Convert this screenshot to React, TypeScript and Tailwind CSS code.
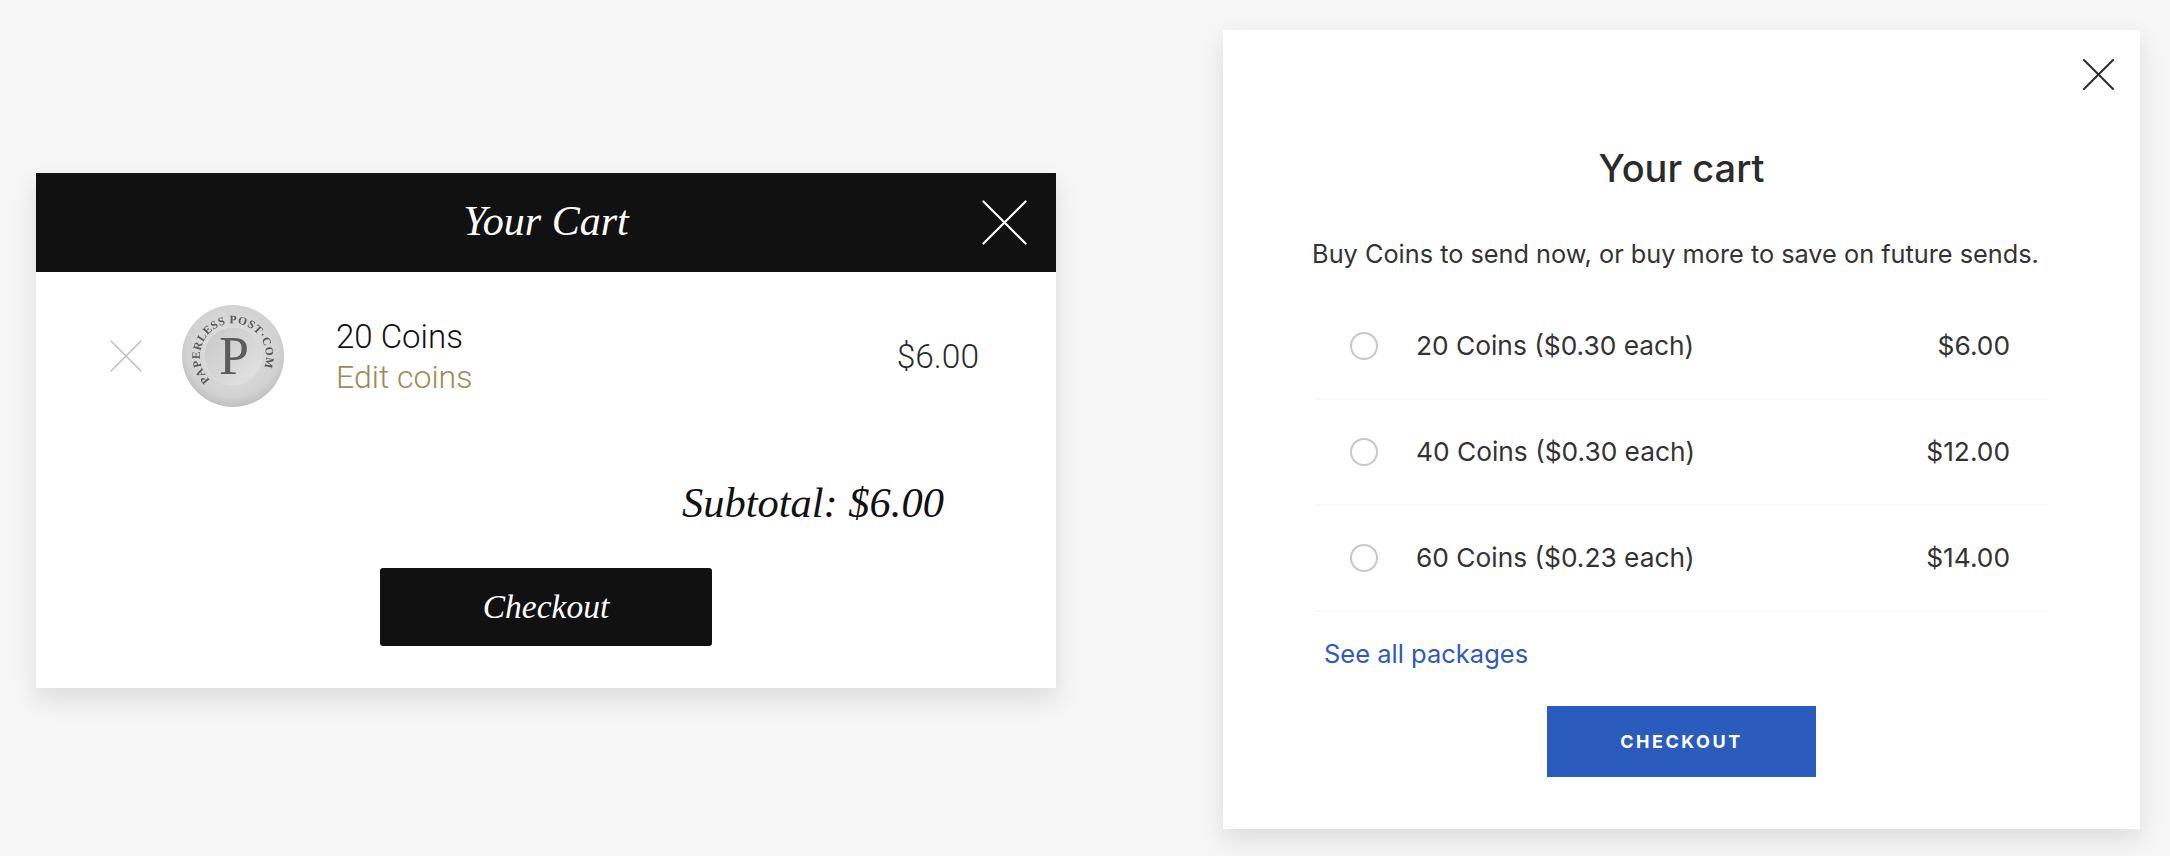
const SERIF = "font-['Liberation_Serif',serif] italic";

function CrossIcon({ size, color, stroke }: { size: number; color: string; stroke: number }) {
  return (
    <svg width={size} height={size} viewBox="0 0 32 32" fill="none" stroke={color} strokeWidth={stroke} strokeLinecap="round" aria-hidden="true">
      <path d="M1 1 31 31M31 1 1 31" />
    </svg>
  );
}

// silver coin with the text running round the rim
function Coin() {
  return (
    <svg width="104" height="104" viewBox="0 0 104 104" className="blur-[0.5px]" aria-hidden="true">
      <defs>
        <radialGradient id="rim" cx="50%" cy="45%" r="60%">
          <stop offset="0%" stopColor="#e4e4e4" />
          <stop offset="75%" stopColor="#d2d2d2" />
          <stop offset="100%" stopColor="#b6b6b6" />
        </radialGradient>
        <linearGradient id="face" x1="0" y1="0" x2="1" y2="1">
          <stop offset="0%" stopColor="#c8c8c8" />
          <stop offset="100%" stopColor="#e4e4e4" />
        </linearGradient>
        <path id="ring" d="M29 76A33 33 0 1 1 75 76" />
      </defs>
      <circle cx="52" cy="52" r="51" fill="url(#rim)" />
      <circle cx="52" cy="52" r="29" fill="url(#face)" stroke="#dedede" strokeWidth="1" />
      <text fontFamily="Liberation Serif, serif" fontSize="11.5" fontWeight="700" fill="#585858" letterSpacing="0.6">
        <textPath href="#ring">PAPERLESS POST·COM</textPath>
      </text>
      <text x="53" y="70" textAnchor="middle" fontFamily="Liberation Serif, serif" fontSize="54" fill="#5c5c5c">P</text>
    </svg>
  );
}

function OldCart() {
  return (
    <div className="mt-[143px] flex h-[515px] w-[1020px] flex-col bg-white shadow-[0_12px_24px_rgba(0,0,0,0.1)]">
      <div className="relative flex h-[99px] items-center justify-center bg-[#111111]">
        <h2 className={`${SERIF} -mt-[3px] text-[42px] text-white`}>Your Cart</h2>
        <div className="absolute right-[29px] top-[27px]">
          <CrossIcon size={45} color="#ffffff" stroke={1.5} />
        </div>
      </div>
      <div className="flex items-center pl-[74px] pt-[32px]">
        <CrossIcon size={32} color="#b8b8b8" stroke={1.2} />
        <div className="ml-[39px]">
          <Coin />
        </div>
        <div className="ml-[51px] pt-[2px] font-['Roboto',sans-serif] font-light leading-[41px]">
          <div className="text-[33px] text-[#111111]">20 Coins</div>
          <div className="text-[32px] text-[#a08a52]">Edit coins</div>
        </div>
        <div className="ml-auto mr-[77px] pt-[2px] font-['Roboto',sans-serif] text-[33.5px] font-light text-[#2b2b2b]">$6.00</div>
      </div>
      <div className={`${SERIF} mr-[112px] mt-[70px] text-right text-[42.5px] leading-[50px] text-[#111111]`}>Subtotal: $6.00</div>
      <button type="button" className={`${SERIF} mx-auto mt-[40px] h-[78px] w-[332px] rounded-[3px] bg-[#111111] text-[33.5px] text-white`}>
        Checkout
      </button>
    </div>
  );
}

const PACKAGES = [
  { label: "20 Coins ($0.30 each)", price: "$6.00" },
  { label: "40 Coins ($0.30 each)", price: "$12.00" },
  { label: "60 Coins ($0.23 each)", price: "$14.00" },
];

function NewCart() {
  return (
    <div className="relative flex h-[799px] w-[917px] flex-col items-center bg-white font-['Inter',sans-serif] shadow-[0_10px_24px_rgba(0,0,0,0.1)]">
      <div className="absolute right-[26px] top-[29px]">
        <CrossIcon size={31} color="#2c2c2c" stroke={2} />
      </div>
      <h2 className="mt-[115px] text-[38px] font-medium leading-[46px] text-[#2b2b2b]">Your cart</h2>
      <p className="mr-[12px] mt-[46px] text-[25.3px] leading-[34px] text-[#333333]">Buy Coins to send now, or buy more to save on future sends.</p>
      <div className="mt-[23px] w-[735px]">
        {PACKAGES.map((p) => (
          <div key={p.label} className="flex h-[106px] items-center border-b-2 border-[#fafafa] pl-[36px] pr-[39px] text-[26.3px] text-[#333333]">
            <span className="h-[28px] w-[28px] rounded-full border-2 border-[#c8c8c8]" />
            <span className="ml-[38px]">{p.label}</span>
            <span className="ml-auto">{p.price}</span>
          </div>
        ))}
      </div>
      <a href="#" className="mt-[26px] self-start pl-[101px] text-[25.5px] leading-[32px] text-[#2f5bb5]">See all packages</a>
      <button type="button" className="mt-[36px] h-[71px] w-[269px] bg-[#2a5bbd] text-[18px] font-bold tracking-[0.14em] text-white">
        CHECKOUT
      </button>
    </div>
  );
}

export default function App() {
  return (
    <div className="flex h-[856px] w-[2170px] items-start gap-[167px] overflow-hidden bg-[#f6f6f6] pl-[36px] pt-[30px]">
      <OldCart />
      <NewCart />
    </div>
  );
}
